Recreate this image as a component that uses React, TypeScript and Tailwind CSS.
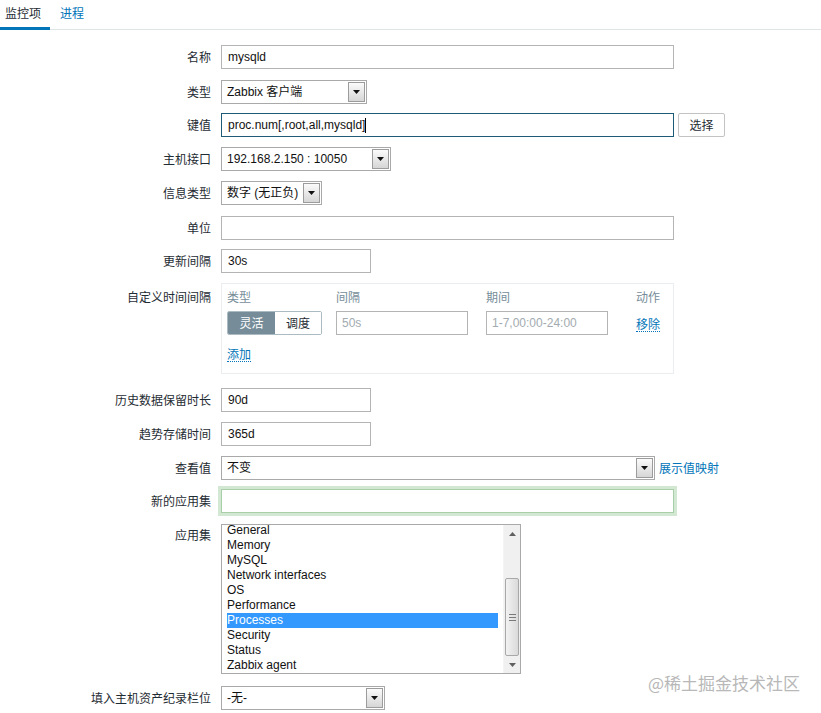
import React from "react";

const LATIN = "font-['Liberation_Sans','Noto_Sans_CJK_SC',sans-serif]";
const CJK = "font-['Noto_Sans_CJK_SC','Liberation_Sans',sans-serif]";

function Arrow() {
  return (
    <div className="w-[17px] h-full border border-[#9c9c9c] bg-gradient-to-b from-[#fbfbfb] to-[#d6d6d6] flex items-center justify-center shrink-0">
      <svg width="7" height="4" viewBox="0 0 7 4">
        <path d="M0 0 L7 0 L3.5 4 Z" fill="#111" />
      </svg>
    </div>
  );
}

function Select({ w, text }: { w: string; text: string }) {
  return (
    <div className={`${w} h-[24px] border border-[#a9a9a9] bg-white flex items-stretch p-[1px]`}>
      <div className={`flex-1 pl-[4px] flex items-center text-[12px] text-[#111] ${LATIN}`}>{text}</div>
      <Arrow />
    </div>
  );
}

function Input({
  w,
  text,
  border = "border-[#b4b4b4]",
  extra = "",
  caret = false,
}: {
  w: string;
  text?: string;
  border?: string;
  extra?: string;
  caret?: boolean;
}) {
  return (
    <div className={`${w} h-[24px] border ${border} bg-white flex items-center pl-[6px] text-[12px] text-[#111] ${LATIN} ${extra}`}>
      {text}
      {caret && <div className="w-[1px] h-[15px] bg-black" />}
    </div>
  );
}

function Row({ label, mt, children }: { label: string; mt: string; children: React.ReactNode }) {
  return (
    <div className={`flex items-center ${mt}`}>
      <div className={`w-[211px] text-right text-[12px] text-[#1f2c33] ${CJK}`}>{label}</div>
      <div className="ml-[10px] flex items-center">{children}</div>
    </div>
  );
}

const apps = [
  "General",
  "Memory",
  "MySQL",
  "Network interfaces",
  "OS",
  "Performance",
  "Processes",
  "Security",
  "Status",
  "Zabbix agent",
];

export default function App() {
  return (
    <div className="w-[821px] h-[713px] bg-white relative overflow-hidden">
      {/* tabs */}
      <div className={`flex h-[30px] shadow-[inset_0_-1px_0_#dfe4e7] text-[12px] ${CJK}`}>
        <div className="w-[50px] pl-[5px] h-[30px] border-b-[3px] border-[#0275b8] flex items-center text-[#1f2c33] pb-[1px]">
          监控项
        </div>
        <div className="pl-[10px] h-[30px] flex items-center text-[#0275b8] pb-[4px]">进程</div>
      </div>

      <div className="flex flex-col">
        <Row label="名称" mt="mt-[15px]">
          <Input w="w-[453px]" text="mysqld" />
        </Row>
        <Row label="类型" mt="mt-[11px]">
          <Select w="w-[146px]" text="Zabbix 客户端" />
        </Row>
        <Row label="键值" mt="mt-[9px]">
          <Input w="w-[453px]" text="proc.num[,root,all,mysqld]" border="border-[#1d5b77]" caret />
          <div className={`ml-[4px] w-[47px] h-[24px] border border-[#c3c3c3] rounded-[2px] bg-white flex items-center justify-center text-[12px] text-[#1f2c33] ${CJK}`}>
            选择
          </div>
        </Row>
        <Row label="主机接口" mt="mt-[10px]">
          <Select w="w-[170px]" text="192.168.2.150 : 10050" />
        </Row>
        <Row label="信息类型" mt="mt-[10px]">
          <Select w="w-[101px]" text="数字 (无正负)" />
        </Row>
        <Row label="单位" mt="mt-[11px]">
          <Input w="w-[453px]" />
        </Row>
        <Row label="更新间隔" mt="mt-[9px]">
          <Input w="w-[150px]" text="30s" />
        </Row>

        {/* custom intervals */}
        <div className="flex items-start mt-[10px]">
          <div className={`w-[211px] text-right text-[12px] text-[#1f2c33] leading-[16px] pt-[6px] ${CJK}`}>
            自定义时间间隔
          </div>
          <div className="ml-[10px] w-[453px] h-[91px] border border-[#ebeef0] pl-[5px] pt-[5px]">
            <div className={`flex text-[12px] leading-[16px] text-[#768d99] ${CJK}`}>
              <div className="w-[95px]">类型</div>
              <div className="w-[132px] ml-[14px]">间隔</div>
              <div className="w-[122px] ml-[18px]">期间</div>
              <div className="ml-[28px]">动作</div>
            </div>
            <div className="flex items-center mt-[6px]">
              <div className={`w-[95px] h-[24px] flex rounded-[2px] border border-[#acbbc2] overflow-hidden text-[12px] ${CJK}`}>
                <div className="w-[47px] bg-[#768d99] text-white flex items-center justify-center">灵活</div>
                <div className="flex-1 bg-white text-[#1f2c33] flex items-center justify-center">调度</div>
              </div>
              <div className={`ml-[14px] w-[132px] h-[24px] border border-[#b4b4b4] flex items-center pl-[5px] text-[12px] text-[#a3abb0] ${LATIN}`}>
                50s
              </div>
              <div className={`ml-[18px] w-[122px] h-[24px] border border-[#b4b4b4] flex items-center pl-[5px] text-[12px] text-[#a3abb0] ${LATIN}`}>
                1-7,00:00-24:00
              </div>
              <div className={`ml-[28px] text-[12px] leading-[15px] text-[#0275b8] border-b border-dotted border-[#0275b8] mt-[2px] ${CJK}`}>
                移除
              </div>
            </div>
            <div className="mt-[11px] flex">
              <div className={`text-[12px] leading-[15px] text-[#0275b8] border-b border-dotted border-[#0275b8] ${CJK}`}>
                添加
              </div>
            </div>
          </div>
        </div>

        <Row label="历史数据保留时长" mt="mt-[14px]">
          <Input w="w-[150px]" text="90d" />
        </Row>
        <Row label="趋势存储时间" mt="mt-[10px]">
          <Input w="w-[150px]" text="365d" />
        </Row>
        <Row label="查看值" mt="mt-[10px]">
          <Select w="w-[434px]" text="不变" />
          <div className={`ml-[4px] text-[12px] text-[#0275b8] ${CJK}`}>展示值映射</div>
        </Row>
        <Row label="新的应用集" mt="mt-[9px]">
          <Input w="w-[453px]" border="border-[#a9cfa9]" extra="shadow-[0_0_0_3px_#d2e8d2]" />
        </Row>

        {/* listbox */}
        <div className="flex items-start mt-[11px]">
          <div className={`w-[211px] text-right text-[12px] text-[#1f2c33] leading-[16px] pt-[3px] ${CJK}`}>应用集</div>
          <div className="ml-[10px] w-[300px] h-[150px] border border-[#a9a9a9] bg-white flex">
            <div className="flex-1 overflow-hidden px-[5px]">
              <div className={`-mt-[2px] text-[12px] leading-[15px] text-[#111] ${LATIN}`}>
                {apps.map((a) => (
                  <div key={a} className={a === "Processes" ? "bg-[#3399ff] text-white h-[15px]" : "h-[15px]"}>
                    {a}
                  </div>
                ))}
              </div>
            </div>
            <div className="w-[17px] h-full bg-[#f0f0f0] flex flex-col border-l border-[#f4f4f4]">
              <div className="h-[17px] flex items-center justify-center">
                <svg width="7" height="4" viewBox="0 0 7 4">
                  <path d="M0 4 L7 4 L3.5 0 Z" fill="#606060" />
                </svg>
              </div>
              <div className="h-[36px]" />
              <div className="mx-[1px] h-[78px] rounded-[2px] border border-[#a8a8a8] bg-gradient-to-r from-[#f2f2f2] to-[#dadada] flex flex-col items-center justify-center gap-[2px]">
                <div className="w-[7px] h-[1px] bg-[#7a7a7a]" />
                <div className="w-[7px] h-[1px] bg-[#7a7a7a]" />
                <div className="w-[7px] h-[1px] bg-[#7a7a7a]" />
              </div>
              <div className="flex-1" />
              <div className="h-[17px] flex items-center justify-center">
                <svg width="7" height="4" viewBox="0 0 7 4">
                  <path d="M0 0 L7 0 L3.5 4 Z" fill="#606060" />
                </svg>
              </div>
            </div>
          </div>
        </div>

        <Row label="填入主机资产纪录栏位" mt="mt-[12px]">
          <Select w="w-[164px]" text="-无-" />
        </Row>
      </div>

      <div className={`absolute left-[648px] top-[671px] text-[17px] leading-[24px] text-[#b8b8b8] ${CJK}`}>
        @稀土掘金技术社区
      </div>
    </div>
  );
}
